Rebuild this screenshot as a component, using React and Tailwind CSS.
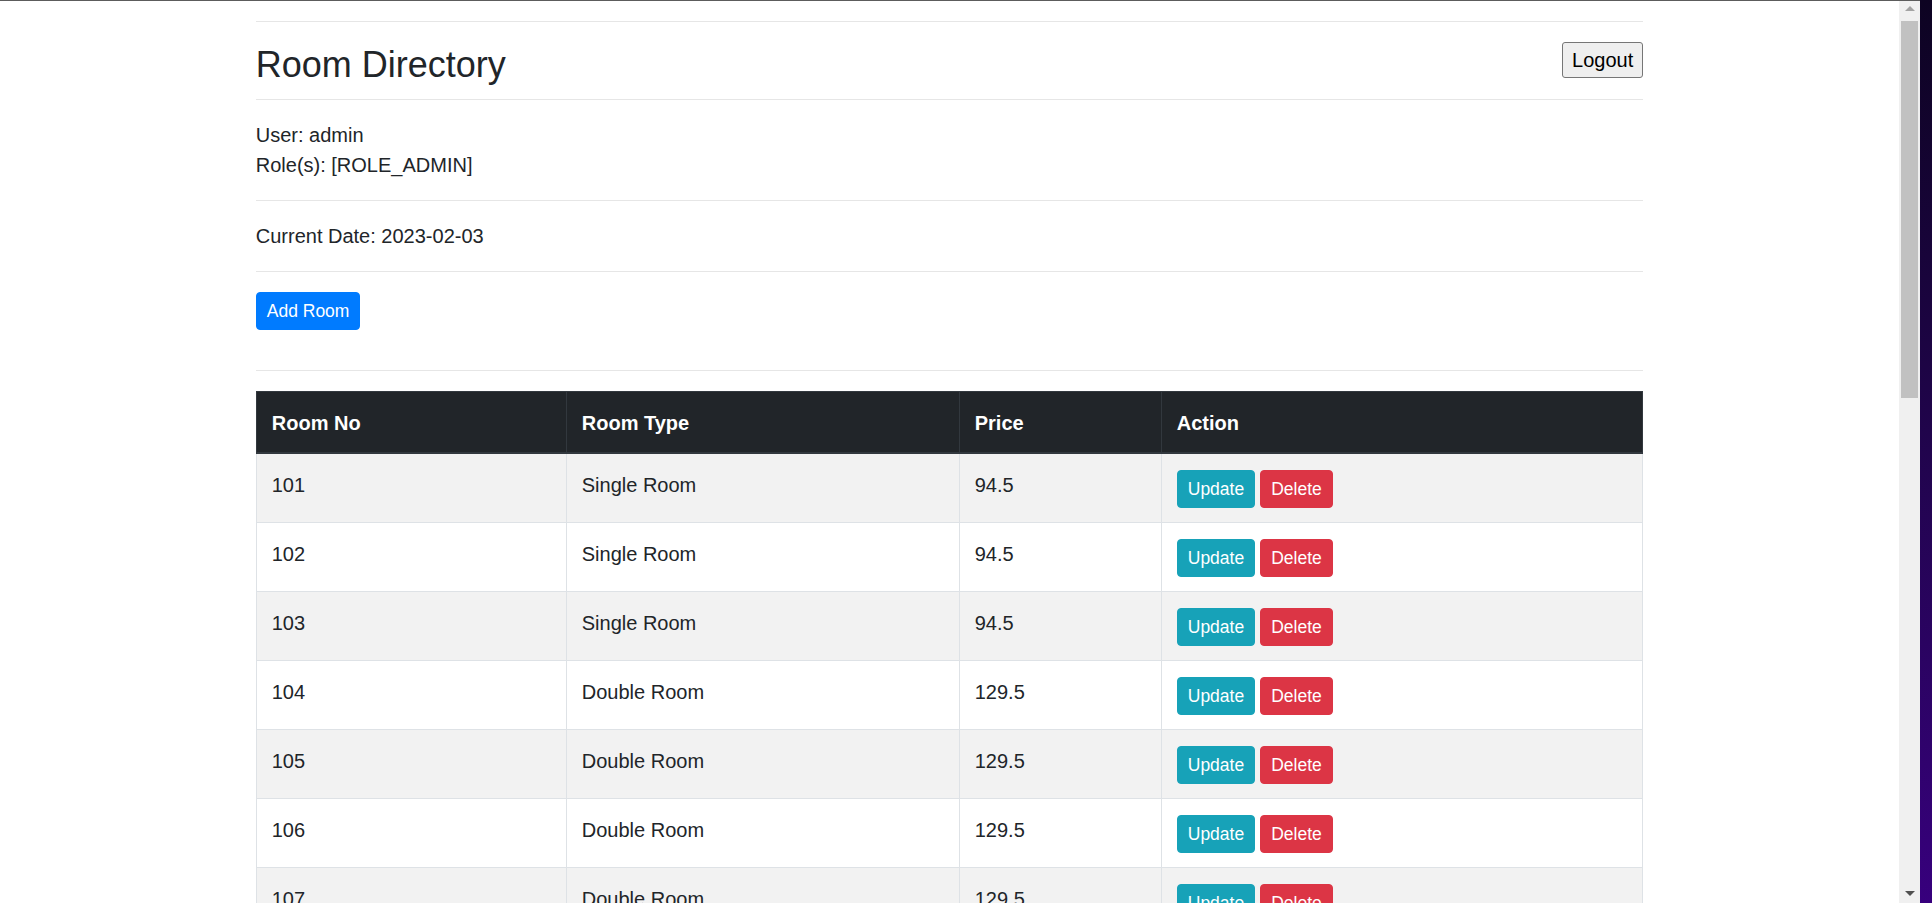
const rooms = [
  { no: 101, type: "Single Room", price: "94.5" },
  { no: 102, type: "Single Room", price: "94.5" },
  { no: 103, type: "Single Room", price: "94.5" },
  { no: 104, type: "Double Room", price: "129.5" },
  { no: 105, type: "Double Room", price: "129.5" },
  { no: 106, type: "Double Room", price: "129.5" },
  { no: 107, type: "Double Room", price: "129.5" },
  { no: 108, type: "Double Room", price: "129.5" },
];

const Scrollbar = () => (
  <div className="flex w-[21px] flex-col items-center bg-[#f0f0f0]">
    <div className="mt-[5px] h-0 w-0 border-x-[5px] border-b-[5px] border-x-transparent border-b-[#a3a3a3]" />
    <div className="mt-[10px] h-[377px] w-[17px] bg-[#c1c1c1]" />
    <div className="flex-1" />
    <div className="mb-[7px] h-0 w-0 border-x-[5px] border-t-[5px] border-x-transparent border-t-[#505050]" />
  </div>
);

const App = () => {
  return (
    <div className="flex h-[903px] overflow-hidden bg-white font-['Liberation_Sans',Arial,sans-serif] text-[20px] text-[#212529]">
      <div className="flex min-w-0 flex-1 flex-col">
        <div className="h-px bg-[#5c5c5c]" />
        <div className="flex min-h-0 flex-1">
          <main className="min-w-0 flex-1 overflow-hidden">
            <div className="mx-auto w-[1425px] px-[18.75px]">
              <hr className="mt-5 border-[#e6e6e6]" />

              <div className="mt-5 flex items-start justify-between">
                <h2 className="mt-[2px] text-[36px] leading-[42px]">Room Directory</h2>
                <button className="h-[36px] rounded-[3px] border border-[#767676] bg-[#efefef] px-[9px] text-[20px] leading-[24px] text-black">
                  Logout
                </button>
              </div>
              <hr className="mt-[13px] border-[#e6e6e6]" />

              <p className="mt-5 leading-[30px]">
                User: admin
                <br />
                Role(s): [ROLE_ADMIN]
              </p>
              <hr className="mt-5 border-[#e6e6e6]" />

              <p className="mt-5 leading-[30px]">Current Date: 2023-02-03</p>
              <hr className="mt-5 border-[#e6e6e6]" />

              <button className="mt-5 rounded-[4px] border border-[#007bff] bg-[#007bff] px-[10px] py-[5px] text-[17.5px] leading-[26px] text-white">
                Add Room
              </button>
              <hr className="mt-10 border-[#e6e6e6]" />

              <table className="mt-5 w-full border-collapse text-left">
                <thead className="bg-[#212529] text-white">
                  <tr>
                    <th className="w-[310px] border border-b-2 border-[#32383e] px-[15px] pt-[16px] pb-[14px] align-bottom font-bold leading-[30px]">Room No</th>
                    <th className="w-[393px] border border-b-2 border-[#32383e] px-[15px] pt-[16px] pb-[14px] align-bottom font-bold leading-[30px]">Room Type</th>
                    <th className="w-[202px] border border-b-2 border-[#32383e] px-[15px] pt-[16px] pb-[14px] align-bottom font-bold leading-[30px]">Price</th>
                    <th className="border border-b-2 border-[#32383e] px-[15px] pt-[16px] pb-[14px] align-bottom font-bold leading-[30px]">Action</th>
                  </tr>
                </thead>
                <tbody>
                  {rooms.map((room, i) => (
                    <tr key={room.no} className={i % 2 === 0 ? "bg-[#f2f2f2]" : "bg-white"}>
                      <td className="border border-[#dee2e6] px-[15px] pt-[16px] pb-[14px] align-top leading-[30px]">{room.no}</td>
                      <td className="border border-[#dee2e6] px-[15px] pt-[16px] pb-[14px] align-top leading-[30px]">{room.type}</td>
                      <td className="border border-[#dee2e6] px-[15px] pt-[16px] pb-[14px] align-top leading-[30px]">{room.price}</td>
                      <td className="border border-[#dee2e6] px-[15px] pt-[16px] pb-[14px] align-top leading-[30px]">
                        <div className="flex gap-[5px]">
                          <button className="rounded-[4px] border border-[#17a2b8] bg-[#17a2b8] px-[10px] py-[5px] text-[17.5px] leading-[26px] text-white">
                            Update
                          </button>
                          <button className="rounded-[4px] border border-[#dc3545] bg-[#dc3545] px-[10px] py-[5px] text-[17.5px] leading-[26px] text-white">
                            Delete
                          </button>
                        </div>
                      </td>
                    </tr>
                  ))}
                </tbody>
              </table>
            </div>
          </main>
          <Scrollbar />
        </div>
      </div>
      <div className="w-[12px] bg-gradient-to-b from-[#0d0322] to-[#37007d]" />
    </div>
  );
};

export default App;
